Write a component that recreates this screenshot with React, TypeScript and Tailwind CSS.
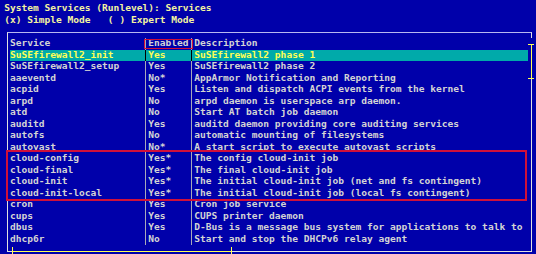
import React from "react";

type Svc = { s: string; e: string; d: string; sel?: boolean };

const rows: Svc[] = [
  { s: "SuSEfirewall2_init", e: "Yes", d: "SuSEfirewall2 phase 1", sel: true },
  { s: "SuSEfirewall2_setup", e: "Yes", d: "SuSEfirewall2 phase 2" },
  { s: "aaeventd", e: "No*", d: "AppArmor Notification and Reporting" },
  { s: "acpid", e: "Yes", d: "Listen and dispatch ACPI events from the kernel" },
  { s: "arpd", e: "No", d: "arpd daemon is userspace arp daemon." },
  { s: "atd", e: "No", d: "Start AT batch job daemon" },
  { s: "auditd", e: "Yes", d: "auditd daemon providing core auditing services" },
  { s: "autofs", e: "No", d: "automatic mounting of filesystems" },
  { s: "autoyast", e: "No*", d: "A start script to execute autoyast scripts" },
  { s: "cloud-config", e: "Yes*", d: "The config cloud-init job" },
  { s: "cloud-final", e: "Yes*", d: "The final cloud-init job" },
  { s: "cloud-init", e: "Yes*", d: "The initial cloud-init job (net and fs contingent)" },
  { s: "cloud-init-local", e: "Yes*", d: "The initial cloud-init job (local fs contingent)" },
  { s: "cron", e: "Yes", d: "Cron job service" },
  { s: "cups", e: "Yes", d: "CUPS printer daemon" },
  { s: "dbus", e: "Yes", d: "D-Bus is a message bus system for applications to talk to" },
  { s: "dhcp6r", e: "No", d: "Start and stop the DHCPv6 relay agent" },
];

function Sep({ dark }: { dark?: boolean }) {
  return (
    <div className="w-[5.76px] shrink-0 flex justify-center">
      <div className={dark ? "w-px bg-[#000000]" : "w-px bg-[#a8a8b8]"} />
    </div>
  );
}

function Row({ r }: { r: Svc }) {
  return (
    <div
      className={
        r.sel
          ? "flex h-[11.52px] bg-[#00aaaa] text-[#ffff55]"
          : "flex h-[11.52px] text-[#d4d4d4]"
      }
    >
      <div className="w-[132.48px] shrink-0 whitespace-pre overflow-hidden">{r.s}</div>
      <Sep dark={r.sel} />
      <div className="w-[40.32px] shrink-0 whitespace-pre">{r.e}</div>
      <Sep dark={r.sel} />
      <div className="w-[334.08px] shrink-0 whitespace-pre overflow-hidden">{r.d}</div>
    </div>
  );
}

export default function App() {
  return (
    <div className="relative w-[536px] h-[254px] overflow-hidden bg-[#0000aa] pt-[3.44px] pl-[4.24px] font-['DejaVu_Sans_Mono',monospace] font-bold text-[9.57px] leading-[10px]">
      <div className="h-[11.52px] text-[#f4f4a0] whitespace-pre">System Services (Runlevel): Services</div>
      <div className="h-[11.52px] text-[#f4f4a0] whitespace-pre">(x) Simple Mode   ( ) Expert Mode</div>

      {/* top frame */}
      <div className="h-[11.52px] pt-[5.76px] pl-[2.38px]">
        <div className="w-[525.16px] h-[5.76px] border-l border-t border-r border-l-[#e0e0e0] border-r-[#e0e0e0] border-t-[#b8b8f0]" />
      </div>

      {/* body */}
      <div className="flex">
        <div className="w-[5.76px] shrink-0 flex justify-center">
          <div className="w-px bg-[#e0e0e0]" />
        </div>
        <div className="flex flex-col w-[518.4px] shrink-0">
          <div className="flex h-[11.52px] text-[#d4d4d4]">
            <div className="w-[132.48px] shrink-0">Service</div>
            <div className="relative flex w-[51.84px] shrink-0">
              <Sep />
              <div className="w-[40.32px] shrink-0">Enabled</div>
              <Sep />
              <div className="absolute left-[1.6px] top-[0.9px] w-[49px] h-[10.6px] border border-[#d0103a]" />
            </div>
            <div className="w-[334.08px] shrink-0">Description</div>
          </div>
          {rows.map((r) => (
            <Row key={r.s} r={r} />
          ))}
        </div>
        <div className="w-[5.76px] shrink-0 flex flex-col items-center">
          <div className="h-[5.76px] shrink-0" />
          <div className="w-full h-px shrink-0 bg-[#ffff55]" />
          <div className="w-px h-[33.56px] shrink-0 bg-[#ffff55]" />
          <div className="w-full h-px shrink-0 bg-[#ffff55]" />
          <div className="w-px flex-1 bg-[#e0e0e0]" />
        </div>
      </div>

      {/* bottom frame with horizontal scrollbar */}
      <div className="flex h-[11.52px]">
        <div className="w-[5.76px] pl-[2.38px] shrink-0">
          <div className="h-[6.76px] border-l border-b border-[#e0e0e0]" />
        </div>
        <div className="w-[2.38px] shrink-0">
          <div className="h-[6.76px] border-b border-[#e0e0e0]" />
        </div>
        <div className="w-[219.88px] h-[10px] mt-[1.3px] shrink-0 border-x border-[#ffff55]">
          <div className="mt-[4.46px] h-px bg-[#ffff55]" />
        </div>
        <div className="w-[299.52px] h-[6.76px] shrink-0 border-b border-r border-[#e0e0e0]" />
      </div>

      {/* annotation box */}
      <div className="absolute left-[6px] top-[149.5px] w-[521px] h-[51px] border-2 border-[#d0103a]" />
    </div>
  );
}
